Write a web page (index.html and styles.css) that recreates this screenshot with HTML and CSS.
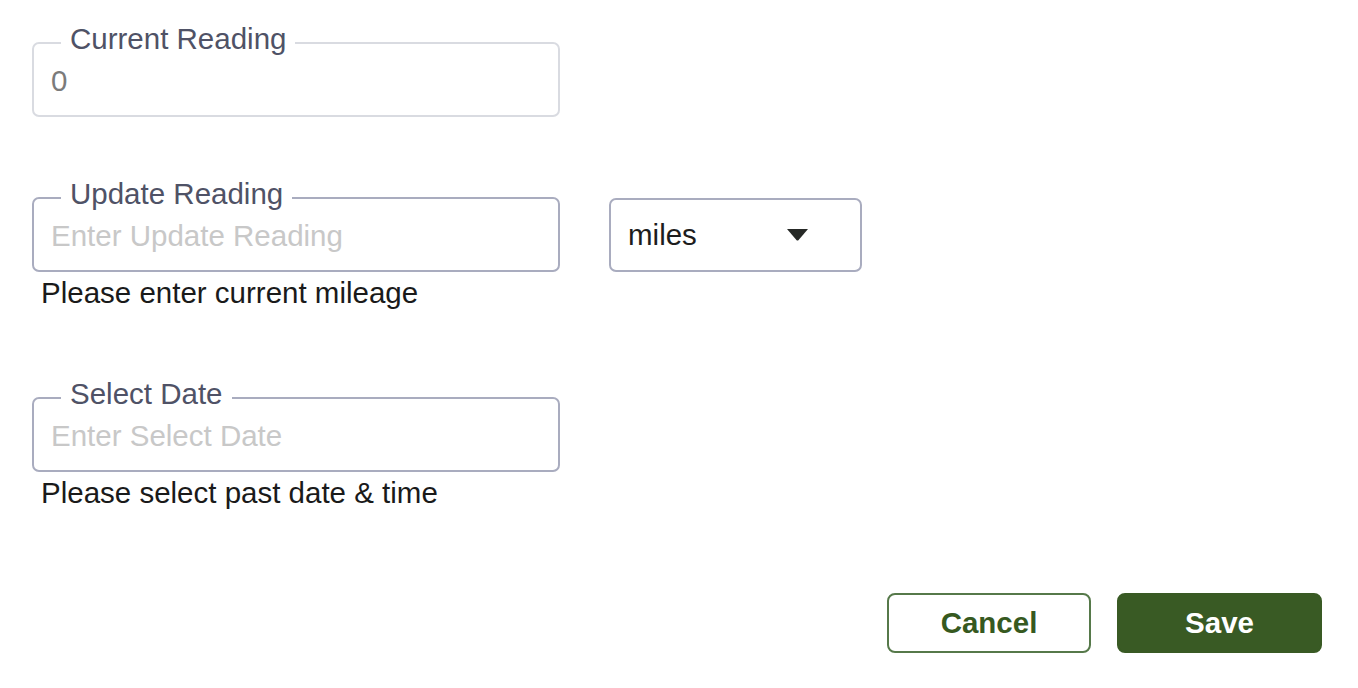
FILE: index.html
```html
<!DOCTYPE html>
<html lang="en">
<head>
<meta charset="utf-8">
<title>Update Reading</title>
<link rel="stylesheet" href="styles.css">
</head>
<body>
<main class="form">
  <div class="field field--current">
    <fieldset class="outline outline--muted">
      <legend class="outline__label">Current Reading</legend>
      <input class="outline__input outline__input--value" type="text" value="0" readonly>
    </fieldset>
  </div>

  <div class="field field--update">
    <div class="field__row">
      <fieldset class="outline">
        <legend class="outline__label">Update Reading</legend>
        <input class="outline__input" type="text" placeholder="Enter Update Reading">
      </fieldset>
      <div class="select">
        <span class="select__value">miles</span>
        <svg class="select__caret" width="23" height="13" viewBox="0 0 23 13" aria-hidden="true">
          <path d="M1 1 L22 1 L12.6 12 Q11.5 13.2 10.4 12 Z" fill="#262926"/>
        </svg>
      </div>
    </div>
    <p class="field__help">Please enter current mileage</p>
  </div>

  <div class="field field--date">
    <fieldset class="outline">
      <legend class="outline__label">Select Date</legend>
      <input class="outline__input" type="text" placeholder="Enter Select Date">
    </fieldset>
    <p class="field__help">Please select past date &amp; time</p>
  </div>

  <div class="actions">
    <button class="btn btn--outline" type="button">Cancel</button>
    <button class="btn btn--primary" type="button">Save</button>
  </div>
</main>
</body>
</html>
```

FILE: styles.css
```css
* {
  box-sizing: border-box;
}

html, body {
  margin: 0;
  background: #ffffff;
}

body {
  font-family: "Liberation Sans", Arial, Helvetica, sans-serif;
  font-size: 29.5px;
  color: #1d1d1d;
}

.form {
  padding: 22px 36px 0 32px;
  display: flex;
  flex-direction: column;
}

.field--current {
  margin-bottom: 60px;
}

.field--update {
  margin-bottom: 67px;
}

.field__row {
  display: flex;
  align-items: flex-end;
  gap: 49px;
}

.outline {
  width: 528px;
  min-width: 0;
  margin: 0;
  padding: 0 0 17px 0;
  border: 2px solid #a9acbf;
  border-radius: 7px;
}

.outline--muted {
  border-color: #d9dbe1;
}

.outline__label {
  margin-left: 27px;
  padding: 0 9px 8px 9px;
  font-size: 29.5px;
  line-height: 34px;
  color: #4f5266;
}

.outline__input {
  display: block;
  width: 100%;
  height: 34px;
  margin: 0;
  padding: 0 0 0 17px;
  border: none;
  outline: none;
  background: transparent;
  font-family: inherit;
  font-size: 29.5px;
  line-height: 34px;
  color: #1d1d1d;
}

.outline__input::placeholder {
  color: #c8c8c8;
  opacity: 1;
}

.outline__input--value {
  color: #7b7b7b;
}

.field__help {
  margin: 4px 0 0 9px;
  font-size: 29.5px;
  line-height: 34px;
  color: #1a1a1a;
}

.select {
  width: 253px;
  height: 74px;
  display: flex;
  align-items: center;
  justify-content: space-between;
  padding: 0 51px 0 17px;
  border: 2px solid #a9acbf;
  border-radius: 7px;
}

.select__value {
  line-height: 34px;
  color: #1d1d1d;
}

.select__caret {
  display: block;
  margin-top: -2px;
}

.actions {
  margin-top: 83px;
  display: flex;
  justify-content: flex-end;
  gap: 26px;
}

.btn {
  height: 60px;
  border-radius: 8px;
  font-family: inherit;
  font-size: 29.5px;
  font-weight: 700;
  line-height: 34px;
  cursor: pointer;
}

.btn--outline {
  width: 204px;
  background: #ffffff;
  border: 2px solid #56794a;
  color: #36591f;
}

.btn--primary {
  width: 205px;
  background: #395a24;
  border: 2px solid #395a24;
  color: #ffffff;
}
```
